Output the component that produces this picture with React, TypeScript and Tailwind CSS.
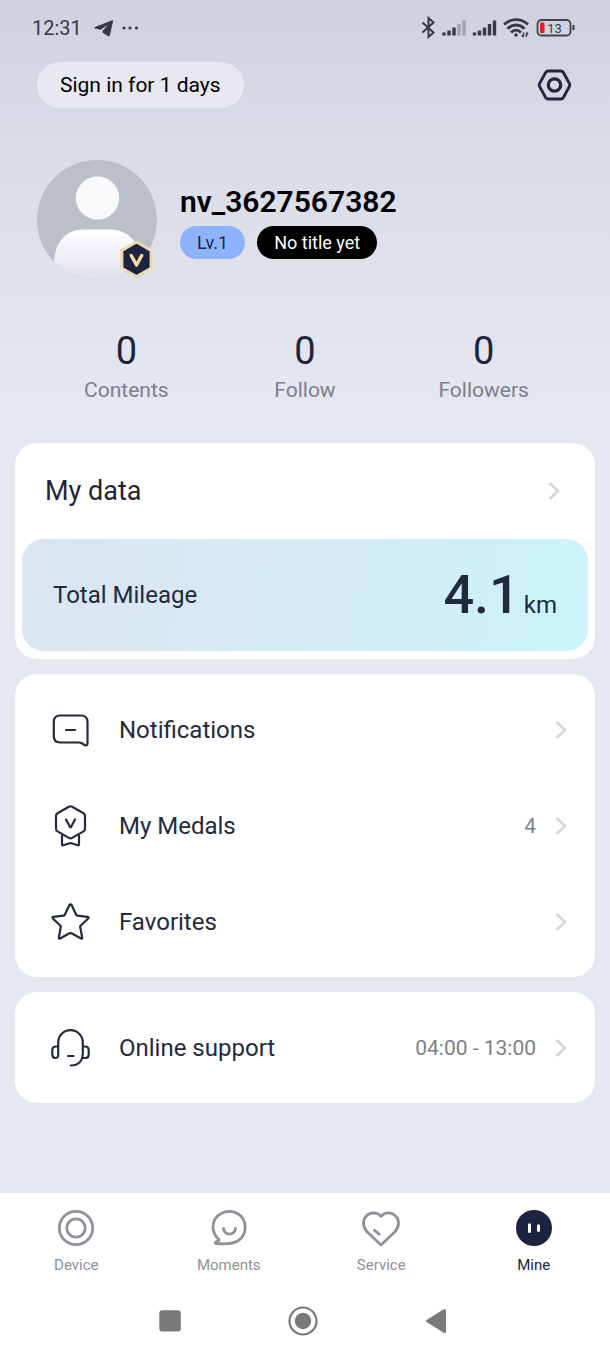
import type { ReactNode } from "react";

function Chevron() {
  return (
    <svg width="12" height="20" viewBox="0 0 12 20" fill="none" stroke="#d5d6d9" strokeWidth="2.6" className="shrink-0" aria-hidden="true">
      <path d="M1.500 2 10 10 1.500 18" />
    </svg>
  );
}

function StatusBar() {
  return (
    <div className="flex h-14 items-center justify-between pl-8 pr-[34px] text-[#373a45]">
      <div className="flex items-center">
        <span className="text-xl leading-6">12:31</span>
        <svg width="20" height="18" viewBox="0 0 20 18" fill="currentColor" className="ml-3 shrink-0" aria-hidden="true">
          <path d="M18.200 1.200 1 8.100c-1 .5-.8 1.200.1 1.400l5.500 1.300L13.600 6.200 8.500 12l-.1 1.400 5.500 3.600c.9.500 1.800.2 2-.8L19.100 2c.1-.7-.2-1-.9-.8Z" />
        </svg>
        <svg width="20" height="6" viewBox="0 0 20 6" fill="currentColor" className="ml-2 shrink-0" aria-hidden="true">
          <circle cx="2" cy="3" r="1.600" />
          <circle cx="8" cy="3" r="1.600" />
          <circle cx="14.500" cy="3" r="1.600" />
        </svg>
      </div>
      <svg width="156" height="24" viewBox="0 0 156 24" aria-label="Bluetooth on, signal, Wi-Fi, battery 13 percent" role="img">
        <g transform="translate(1 1)" fill="none" stroke="currentColor" strokeWidth="2">
          <path d="m1.500 5.500 11 10-5 4.500V1l5 4.500-11 10" />
        </g>
        <g strokeWidth="3.400" strokeLinecap="butt">
          <path d="M24 19.500v-3M29 19.500v-5M34 19.500v-8" stroke="#373a45" />
          <path d="M39 19.500V8M44 19.500V4.500" stroke="#9fa1ad" />
          <path d="M54.500 19.500v-3M59.500 19.500v-5M64.500 19.500v-8M69.500 19.500V8M74.500 19.500V4.500" stroke="#373a45" />
        </g>
        <g fill="none" stroke="#373a45" strokeWidth="2.900">
          <path d="M84 8.500c7-6.500 17-6.500 24 0M87.500 12.700c5-5 12-5 17 0M91 16.500c3-3 7-3 10 0" />
          <circle cx="96" cy="19" r="1.300" fill="#373a45" strokeWidth="1" />
          <path d="M103.500 16.500v4.500m-1.800-1.800 1.800 1.800M106.500 21v-4.500m1.800 1.800-1.800-1.800" strokeWidth="1.400" />
        </g>
        <rect x="117.500" y="4" width="33" height="15.500" rx="4" fill="none" stroke="#41434d" strokeWidth="1.800" />
        <path d="M153.500 9v5" stroke="#41434d" strokeWidth="2.200" />
        <rect x="120" y="6.500" width="4.500" height="10.500" rx="1" fill="#e3202b" />
        <text x="134.500" y="16.500" textAnchor="middle" fontSize="13" fill="#373a45" className="font-[Roboto]">13</text>
      </svg>
    </div>
  );
}

function Avatar() {
  return (
    <svg width="120" height="120" viewBox="0 0 120 120" role="img" aria-label="Profile picture" className="shrink-0">
      <defs>
        <linearGradient id="bodyFade" x1="0" y1="0" x2="0" y2="1">
          <stop offset="0" stopColor="#fff" />
          <stop offset="1" stopColor="#dfe1ea" />
        </linearGradient>
        <clipPath id="avatarClip">
          <circle cx="60" cy="60" r="60" />
        </clipPath>
      </defs>
      <circle cx="60" cy="60" r="60" fill="#bbc0c8" />
      <circle cx="60.500" cy="38" r="21.700" fill="#f9f9fb" />
      <path d="M17 103c0-19 11-33.500 29-33.500h27c19 0 31 14.500 31 33.500v17H17Z" fill="url(#bodyFade)" clipPath="url(#avatarClip)" />
      <path d="m99.500 82 14.600 8.400v17.800l-14.600 8.400-14.600-8.400V90.400Z" fill="#1d2340" stroke="#ead9b2" strokeWidth="3" strokeLinejoin="round" />
      <path d="m94.300 95.500 5.200 9.500 5.200-9.500" fill="none" stroke="#f6d9a5" strokeWidth="3.400" strokeLinecap="round" strokeLinejoin="round" />
    </svg>
  );
}

const stats = [
  { label: "Contents", value: 0 },
  { label: "Follow", value: 0 },
  { label: "Followers", value: 0 },
];

function LineIcon({ children }: { children: ReactNode }) {
  return (
    <svg width="42" height="42" viewBox="0 0 42 42" fill="none" stroke="#242a40" strokeWidth="2.200" strokeLinecap="round" strokeLinejoin="round" className="shrink-0" aria-hidden="true">
      {children}
    </svg>
  );
}

const noticeIcon = (
  <LineIcon>
    <path d="M11 6.500h21q6.500 0 6.500 6.500v21.500q0 2.500-2.600 1.700l-3.500-2.200q-1-.5-2.500-.5H11q-6.200 0-6.200-6.200V13q0-6.500 6.200-6.500ZM17 21h9" />
  </LineIcon>
);
const medalIcon = (
  <LineIcon>
    <path d="M19.900 1.700q1.600-.9 3.200 0l11.400 6.500q1.500.9 1.500 2.600v13q0 1.700-1.500 2.600l-11.400 6.500q-1.600.9-3.200 0L8.500 26.400Q7 25.500 7 23.800v-13Q7 9.100 8.500 8.200ZM17 14.500l4 7.500q.5.700 1 0l4-7.500M13 30v9.300q0 1.300 1.200.9l7.300-2.200 7.300 2.200q1.200.4 1.200-.9V30" />
  </LineIcon>
);
const starIcon = (
  <LineIcon>
    <path d="m22.700 4.200 4.500 9.600q.3.700 1.100.8l10.300 1.300q1.700.3.500 1.600l-7.500 7.200q-.6.500-.4 1.300l2 10.700q.2 1.600-1.200.8l-9.500-5.200q-1-.5-2 0L11 37.500q-1.400.8-1.200-.8l2-10.700q.2-.8-.4-1.300l-7.500-7.200q-1.200-1.300.5-1.600l10.300-1.300q.8-.1 1.100-.8l4.500-9.600q1.200-1.900 2.400 0Z" />
  </LineIcon>
);
const headsetIcon = (
  <LineIcon>
    <path d="M9.200 29V15.500a12.300 12.300 0 0 1 24.600 0V26c0 8-4.500 12.500-12 12.500M9.200 19.500H7q-3.700 0-3.700 3.700v4q0 3.800 3 3.800t2.900-3.800M33.800 19.500H36q3.700 0 3.700 3.700v4q0 3.800-3 3.800h-3.500M19 29h5.500" />
  </LineIcon>
);

function MenuRow({ icon, label, value }: { icon: ReactNode; label: string; value?: string }) {
  return (
    <button type="button" className="flex h-24 w-full items-center pl-[34px] pr-7 text-left">
      {icon}
      <span className="ml-7 grow text-2xl text-[#242a3d]">{label}</span>
      {value && <span className="text-[21px] leading-7 text-[#7d8089]">{value}</span>}
      <span className="ml-[19px]">
        <Chevron />
      </span>
    </button>
  );
}

const tabs = [
  {
    label: "Device",
    icon: (
      <>
        <circle cx="20" cy="20" r="16.700" />
        <circle cx="20" cy="20" r="9.200" />
      </>
    ),
  },
  {
    label: "Moments",
    icon: (
      <path d="M7.300 35.500c9 .8 17.600.2 22.200-3 9.500-7 8.500-21.500-1-27C17.500-.3 4 7 4 19c0 5.500 2.200 9.300 6 12.700.5.500-1 1.500-2.700 2-1.300.5-1.300 1.600 0 1.800ZM14.500 20.500c1 7.500 11 7.500 12 0" />
    ),
  },
  {
    label: "Service",
    icon: (
      <path d="M19.200 36.300 6.300 24C1.500 19 1.300 12 5.300 8 9.300 3.600 16 3.900 20 8.200c4-4.300 10.700-4.600 14.700-.2 4 4 3.800 11-1 16L20.800 36.300q-.8.800-1.600 0ZM12.500 21.500l6.500 5.500" strokeLinecap="butt" />
    ),
  },
  {
    label: "Mine",
    active: true,
    icon: (
      <>
        <circle cx="20" cy="20" r="18" fill="#1c2240" stroke="none" />
        <path d="M15.500 16.700v6.800M24.500 17.700v4.800" stroke="#fff" strokeWidth="3" />
      </>
    ),
  },
];

export default function App() {
  return (
    <div className="flex min-h-screen flex-col bg-[#e4e8f0] bg-[linear-gradient(180deg,#cfd1df_0px,#d8dae6_130px,#dfe1ea_270px,#e4e8f0_410px)] font-['Roboto',sans-serif]">
      <StatusBar />
      <header className="flex items-center justify-between px-[37px] pt-1.5">
        <button type="button" className="h-[46px] rounded-full bg-[#e8e9f0] px-[23px] text-[21px] leading-7 text-black">
          Sign in for 1 days
        </button>
        <button type="button" aria-label="Settings">
          <svg width="36" height="36" viewBox="0 0 36 36" fill="none" stroke="#20263d" strokeWidth="2.800" strokeLinejoin="round">
            <path d="M11.200 4h12.600q1.700 0 2.600 1.500l6 11q.8 1.500 0 3l-6 11q-.9 1.500-2.600 1.500H11.200q-1.700 0-2.600-1.500l-6-11q-.8-1.500 0-3l6-11Q9.500 4 11.200 4Z" />
            <circle cx="17.500" cy="18" r="6.200" strokeWidth="3.200" />
          </svg>
        </button>
      </header>

      <main className="flex grow flex-col">
        <section className="mt-[52px] flex items-center gap-[23px] px-[37px]">
          <Avatar />
          <div>
            <h1 className="pt-0.5 text-[30px] font-semibold leading-9 text-black">nv_3627567382</h1>
            <div className="mt-1.5 flex gap-3 text-lg leading-[33px]">
              <span className="rounded-full bg-[#8db3ff] px-[17px] text-[#1d2744]">Lv.1</span>
              <span className="rounded-full bg-black px-[17px] text-white">No title yet</span>
            </div>
          </div>
        </section>

        <section className="mt-12 grid grid-cols-3 px-[37px] text-center">
          {stats.map((s) => (
            <button type="button" key={s.label} className="flex flex-col items-center">
              <span className="text-[38px] leading-[46px] text-[#1f243c]">{s.value}</span>
              <span className="text-[21px] leading-8 text-[#7b7f8c]">{s.label}</span>
            </button>
          ))}
        </section>

        <div className="mt-[37px] flex flex-col gap-[15px] px-[15px]">
          <section className="rounded-[22px] bg-white px-[7px] pb-2">
            <button type="button" className="flex h-24 w-full items-center justify-between pl-[23px] pr-7 text-left">
              <span className="text-[27px] leading-8 text-[#1f243a]">My data</span>
              <Chevron />
            </button>
            <div className="flex h-28 items-center justify-between rounded-[22px] bg-[linear-gradient(100deg,#dbe5f1_0%,#d5ebf6_45%,#d1eef8_72%,#cbf4fb_100%)] px-[31px] text-[#1f2940]">
              <span className="text-2xl">Total Mileage</span>
              <span className="flex items-baseline gap-1">
                <span className="text-[54px] font-medium leading-[68px]">4.1</span>
                <span className="text-2xl">km</span>
              </span>
            </div>
          </section>

          <section className="rounded-[22px] bg-white pb-[7px] pt-2">
            <MenuRow icon={noticeIcon} label="Notifications" />
            <MenuRow icon={medalIcon} label="My Medals" value="4" />
            <MenuRow icon={starIcon} label="Favorites" />
          </section>

          <section className="rounded-[22px] bg-white pb-[7px] pt-2">
            <MenuRow icon={headsetIcon} label="Online support" value="04:00 - 13:00" />
          </section>
        </div>
      </main>

      <footer className="bg-white">
        <nav className="grid grid-cols-4 pt-[15px]">
          {tabs.map((t) => (
            <a key={t.label} href="#" className={t.active ? "flex flex-col items-center text-[#1f243c]" : "flex flex-col items-center text-[#8f919b]"}>
              <svg width="40" height="40" viewBox="0 0 40 40" fill="none" stroke="#8f929b" strokeWidth="2.800" strokeLinecap="round" strokeLinejoin="round" aria-hidden="true">
                {t.icon}
              </svg>
              <span className="mt-[7px] text-[15px] leading-5">{t.label}</span>
            </a>
          ))}
        </nav>
        <div className="flex h-[81px] items-center justify-center gap-[101px] pr-1 pt-2.5">
          <button type="button" aria-label="Recent apps">
            <svg width="32" height="32" viewBox="0 0 32 32" fill="#7a7a7a">
              <rect x="5.300" y="5.300" width="21.500" height="21.300" rx="3" />
            </svg>
          </button>
          <button type="button" aria-label="Home">
            <svg width="32" height="32" viewBox="0 0 32 32" fill="#7a7a7a">
              <circle cx="16" cy="16" r="13.500" fill="none" stroke="#7a7a7a" strokeWidth="2.200" />
              <circle cx="16" cy="16" r="8.200" />
            </svg>
          </button>
          <button type="button" aria-label="Back">
            <svg width="32" height="32" viewBox="0 0 32 32" fill="#7a7a7a">
              <path d="M6.500 15.100 23.800 4.300q2.200-1 2.200 1.200v21q0 2.200-2.200 1.200L6.500 16.900q-1.300-.9 0-1.800Z" />
            </svg>
          </button>
        </div>
      </footer>
    </div>
  );
}
